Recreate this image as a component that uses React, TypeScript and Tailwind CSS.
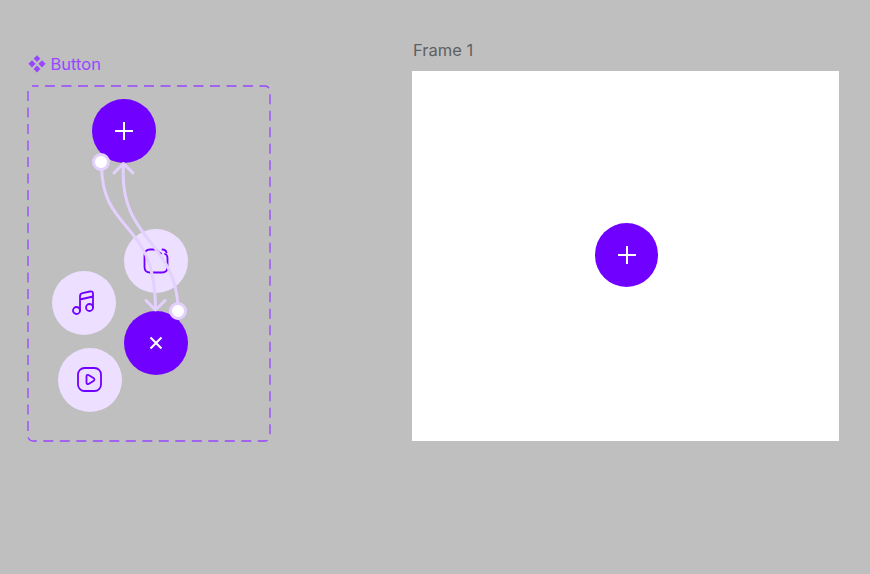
const PURPLE = "#7000ff";

function Plus() {
  return (
    <svg width="18" height="18" viewBox="0 0 18 18" fill="none" stroke="#fff" strokeWidth="2">
      <path d="M0 9H18M9 0V18" />
    </svg>
  );
}

function Close() {
  return (
    <svg width="14" height="14" viewBox="0 0 14 14" fill="none" stroke="#fff" strokeWidth="2.1">
      <path d="M1.5 1.5L12.5 12.5M12.5 1.5L1.5 12.5" />
    </svg>
  );
}

function CropIcon() {
  return (
    <svg width="26" height="26" viewBox="0 0 26 26" fill="none" stroke={PURPLE} strokeWidth="1.8" strokeLinecap="round" strokeLinejoin="round">
      <path d="M7 1.5H12.5C15 1.5 15 5.5 18 5.5M19.5 1.5C22 1.5 23 2.5 23.5 4.5M22 6C23.5 6.5 24.5 7.5 24.5 10V19C24.5 22.5 22.5 24.5 19 24.5H7C3.5 24.5 1.5 22.5 1.5 19V7C1.5 3.5 3.5 1.5 7 1.5" />
    </svg>
  );
}

function MusicIcon() {
  return (
    <svg width="24" height="26" viewBox="0 0 24 26" fill="none" stroke={PURPLE} strokeWidth="1.8" strokeLinecap="round" strokeLinejoin="round">
      <circle cx="4.5" cy="20.5" r="3.5" />
      <circle cx="17.5" cy="17.5" r="3.5" />
      <path d="M8 20.5V6.5C8 4.5 9 3.5 10.5 3.2L18 1.5C20 1 21 2 21 3.5V17.5M8 9.5L21 6.5" />
    </svg>
  );
}

function PlayIcon() {
  return (
    <svg width="25" height="25" viewBox="0 0 25 25" fill="none" stroke={PURPLE} strokeWidth="1.8" strokeLinecap="round" strokeLinejoin="round">
      <rect x="1" y="1" width="23" height="23" rx="6.5" />
      <path d="M9.5 9.2C9.5 8 10.5 7.5 11.5 8L16.5 11C17.7 11.7 17.7 13.3 16.5 14L11.5 17C10.5 17.5 9.5 17 9.5 15.8Z" />
    </svg>
  );
}

// x / y are relative to the dashed component set
function Node({ x, y, dark, children }: { x: number; y: number; dark?: boolean; children: React.ReactNode }) {
  return (
    <div
      className={`absolute flex h-[63.5px] w-[63.5px] items-center justify-center rounded-full ${dark ? "bg-[#7000ff]" : "bg-[#ecdfff]"}`}
      style={{ left: x, top: y }}
    >
      {children}
    </div>
  );
}

function Connector({ x, y }: { x: number; y: number }) {
  return (
    <div
      className="absolute h-[18px] w-[18px] rounded-full border-[3.5px] border-[#e4d0ff] bg-white"
      style={{ left: x, top: y }}
    />
  );
}

export default function App() {
  return (
    <div className="flex h-[574px] w-[870px] items-start gap-[142px] overflow-hidden bg-[#bfbfbf] pl-[28px] font-['Inter',sans-serif] text-[16.5px] leading-[20px]">
      {/* component set */}
      <div className="mt-[54px] flex flex-col gap-[12px]">
        <div className="flex items-center gap-[4.5px] text-[#9747ff]">
          <svg width="18" height="18" viewBox="0 0 18 18" fill="#9747ff">
            <path d="M9 .2 12.4 3.6 9 7 5.6 3.6ZM4 5.2 7.6 8.8 4 12.4 .4 8.8ZM14 5.2 17.6 8.8 14 12.4 10.4 8.8ZM9 10.6 12.4 14 9 17.4 5.6 14Z" />
          </svg>
          <span>Button</span>
        </div>
        <div className="relative h-[355px] w-[242px]">
          <svg className="absolute left-[-1px] top-[-1px]" width="244" height="357" fill="none">
            <rect x="1" y="1" width="242" height="355" rx="5" stroke="#9747ff" strokeWidth="1.3" strokeDasharray="10 6.5" strokeDashoffset="4.5" />
          </svg>

          <Node x={64} y={13} dark>
            <Plus />
          </Node>
          <Node x={96} y={143}>
            <CropIcon />
          </Node>
          <Node x={24} y={185}>
            <MusicIcon />
          </Node>
          <Node x={96} y={225} dark>
            <Close />
          </Node>
          <Node x={30} y={262}>
            <PlayIcon />
          </Node>

          {/* prototype noodles */}
          <svg className="absolute left-[-28px] top-[-86px]" width="300" height="450" fill="none" stroke="#e4d0ff" strokeWidth="3" strokeLinecap="round" strokeLinejoin="round">
            <path d="M101.5 165C102 235 155.5 218 155.5 309" />
            <path d="M146 300.5L155.5 310L165 300.5" />
            <path d="M178 308C176 240 118 240 123.5 164" />
            <path d="M114 173L123.5 163.5L133 173" />
          </svg>
          <Connector x={64} y={67} />
          <Connector x={141} y={216} />
        </div>
      </div>

      {/* frame */}
      <div className="mt-[40px] flex flex-col gap-[11px]">
        <div className="pl-[1px] text-[#5f5f5f]">Frame 1</div>
        <div className="flex h-[370px] w-[427px] items-center justify-center bg-white pb-[2px] pl-[2px]">
          <div className="flex h-[63.5px] w-[63.5px] items-center justify-center rounded-full bg-[#7000ff]">
            <Plus />
          </div>
        </div>
      </div>
    </div>
  );
}
